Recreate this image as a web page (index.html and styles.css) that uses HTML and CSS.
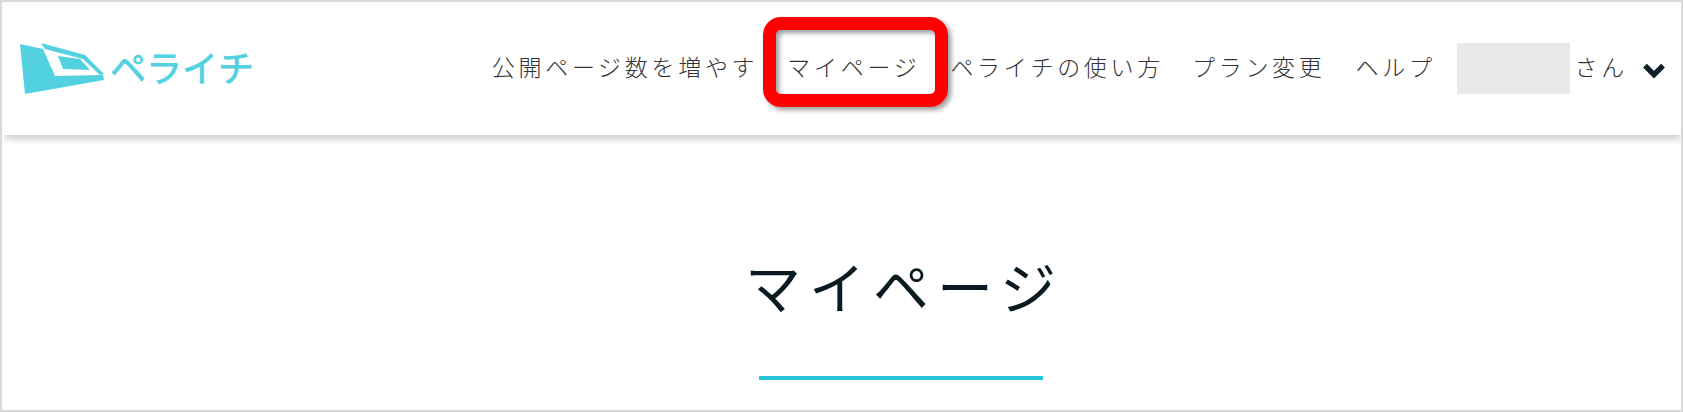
FILE: index.html
```html
<!DOCTYPE html>
<html lang="ja">
<head>
    <meta charset="UTF-8">
    <title>マイページ</title>
    <link rel="stylesheet" href="styles.css">
</head>
<body>

<div class="frame">
    <header class="header">
        <a class="logo">
            <svg class="logo-icon" viewBox="0 0 84 54" width="84" height="54">
                <polygon fill="#52d1e0" points="0,1 23,6 35,33 83,32 84,37 5,51"/>
                <path fill="#52d1e0" fill-rule="evenodd" d="M21,0 L65,12 L84,31 L80,32 L63,16 L25,6 Z"/>
                <polygon fill="#52d1e0" points="38,13 60,16 70,27 43,26"/>
            </svg>
            <span class="logo-text">ペライチ</span>
        </a>
        <nav class="nav">
            <a class="nav-item nav-upgrade">公開ページ数を増やす</a>
            <a class="nav-item nav-mypage">マイページ</a>
            <a class="nav-item nav-howto">ペライチの使い方</a>
            <a class="nav-item nav-plan">プラン変更</a>
            <a class="nav-item nav-help">ヘルプ</a>
            <span class="user-name"></span>
            <span class="nav-item user-suffix">さん</span>
            <svg class="chevron" viewBox="0 0 24 16" width="26" height="17">
                <path d="M3.5,3.5 L12,12 L20.5,3.5" fill="none" stroke="#0d2027" stroke-width="5"/>
            </svg>
        </nav>
    </header>

    <div class="highlight"></div>

    <main class="content">
        <h1 class="page-title">マイページ</h1>
        <div class="title-line"></div>
    </main>
</div>

</body>
</html>
```

FILE: styles.css
```css
body {
    margin: 0;
    background-color: white;
    font-family: "Noto Sans CJK JP", "Noto Sans", sans-serif;
    overflow: hidden;
}
.frame {
    position: relative;
    box-sizing: border-box;
    width: 1683px;
    height: 412px;
    border: 2px solid #d9d9d9;
    overflow: hidden;
}
.header {
    display: flex;
    align-items: center;
    justify-content: space-between;
    height: 133px;
    margin-left: 2px;
    padding: 0 14px 0 16px;
    background-color: white;
    box-shadow: 0 3px 8px rgba(0, 0, 0, 0.25);
    clip-path: inset(0 0 -20px 0);
}
.logo {
    display: flex;
    align-items: center;
    gap: 6px;
    margin-top: 2px;
}
.logo-text {
    margin-bottom: 8px;
    font-size: 36px;
    font-weight: 400;
    line-height: 1;
    color: #52d1e0;
    -webkit-text-stroke: 0.8px #52d1e0;
}
.nav {
    display: flex;
    align-items: center;
}
.nav-item {
    margin-bottom: 6px;
    font-size: 23px;
    font-weight: 300;
    letter-spacing: 3.7px;
    color: #333;
    white-space: nowrap;
}
.nav-upgrade {
    margin-right: 29px;
}
.nav-mypage {
    margin-right: 30px;
}
.nav-howto {
    margin-right: 28px;
}
.nav-plan {
    margin-right: 30px;
}
.nav-help {
    margin-right: 21px;
}
.user-name {
    width: 113px;
    height: 51px;
    margin-right: 5px;
    background-color: #e9e9e9;
}
.user-suffix {
    margin-right: 13px;
}
.chevron {
    margin-top: 3px;
}
/* red annotation over the nav */
.highlight {
    position: absolute;
    left: 761px;
    top: 15px;
    box-sizing: border-box;
    width: 185px;
    height: 90px;
    border: 13px solid #ff0000;
    border-radius: 18px;
    box-shadow: 3px 3px 5px rgba(0, 0, 0, 0.4), inset 3px 3px 5px rgba(0, 0, 0, 0.4);
}
.content {
    display: flex;
    flex-direction: column;
    align-items: center;
    padding-left: 118px;
}
.page-title {
    margin: 110px 0 0 8px;
    font-size: 56px;
    font-weight: 400;
    line-height: 80px;
    letter-spacing: 8px;
    color: #0b1a20;
}
.title-line {
    width: 284px;
    height: 4px;
    margin-top: 51px;
    background-color: #25c4d8;
}
```
